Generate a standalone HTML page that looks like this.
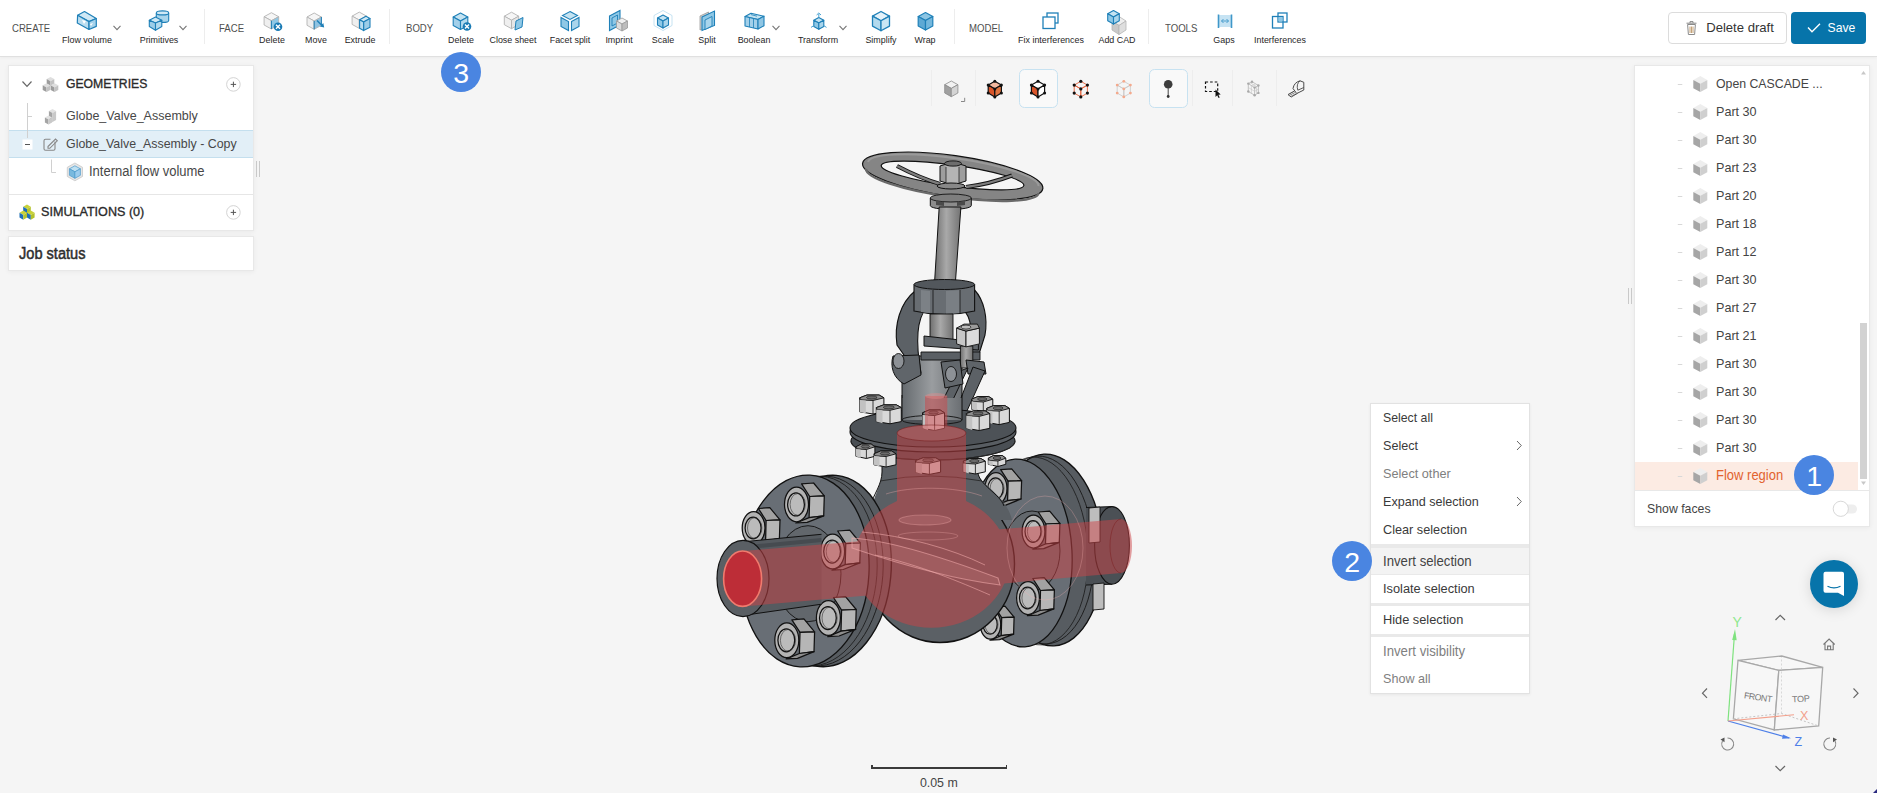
<!DOCTYPE html>
<html><head><meta charset="utf-8">
<style>
*{margin:0;padding:0;box-sizing:border-box}
html,body{width:1877px;height:793px;overflow:hidden;background:#f5f5f5;font-family:"Liberation Sans",sans-serif;color:#333}
.a{position:absolute}
.t{position:absolute;line-height:1;white-space:pre}
svg{position:absolute;overflow:visible}
</style></head><body>
<svg style="left:0;top:0" width="1877" height="793"><defs><linearGradient id="stg" x1="0" x2="1" y1="0" y2="0"><stop offset="0" stop-color="#6f6f6f"/><stop offset="0.45" stop-color="#a9a9a9"/><stop offset="1" stop-color="#737373"/></linearGradient><linearGradient id="bng" x1="0" x2="1" y1="0" y2="0"><stop offset="0" stop-color="#656a6e"/><stop offset="0.5" stop-color="#9a9da0"/><stop offset="1" stop-color="#6a6e72"/></linearGradient></defs><g transform="rotate(8 952.7 176)"><path d="M861.7,176 a91,20.5 0 1 0 182,0 a91,20.5 0 1 0 -182,0 Z M880.5,175.5 a72,10.5 0 1 0 144,0 a72,10.5 0 1 0 -144,0 Z" fill="#858585" fill-rule="evenodd" stroke="#111" stroke-width="1.2"/><path d="M867,174 a86,16 0 0 1 172,0" fill="none" stroke="#9a9a9a" stroke-width="2"/><path d="M866,181 a87,16 0 0 0 174,0" fill="none" stroke="#6a6a6a" stroke-width="2.5"/></g><path d="M897,166 Q920,178 940,184" fill="none" stroke="#111" stroke-width="4.2"/><path d="M897,166 Q920,178 940,184" fill="none" stroke="#7d7d7d" stroke-width="2.4"/><path d="M1012,175.5 Q990,184 966,187" fill="none" stroke="#111" stroke-width="4.2"/><path d="M1012,175.5 Q990,184 966,187" fill="none" stroke="#7d7d7d" stroke-width="2.4"/><path d="M930.3,198 v7.5 a20.5,4 0 0 0 41,0 v-7.5" fill="#8c8c8c" stroke="#111" stroke-width="1"/><ellipse cx="950.8" cy="198" rx="20.5" ry="4" fill="#7e7e7e" stroke="#111" stroke-width="0.9" /><polygon points="936.0,201.0 944.0,202.0 944.0,206.0 936.0,205.0" fill="#4a4a4a" stroke="none" stroke-width="1" stroke-linejoin="round" /><polygon points="957.0,202.0 965.0,201.0 965.0,205.0 957.0,206.0" fill="#4a4a4a" stroke="none" stroke-width="1" stroke-linejoin="round" /><polygon points="940.0,166.0 940.0,181.0 953.0,185.0 966.0,181.0 966.0,166.0 953.0,162.0" fill="#9d9d9d" stroke="#111" stroke-width="1" stroke-linejoin="round" /><polygon points="946.0,166.0 946.0,183.0 959.0,184.0 959.0,167.0" fill="#b4b4b4" stroke="none" stroke-width="1" stroke-linejoin="round" /><path d="M946,167 V183 M959,167 V183" stroke="#111" stroke-width="0.7"/><ellipse cx="953" cy="163.5" rx="8.5" ry="2.6" fill="#6d6d6d" stroke="#111" stroke-width="0.9" /><ellipse cx="951" cy="186" rx="14" ry="3" fill="#888" stroke="#111" stroke-width="1" /><polygon points="939.2,207.0 960.9,207.0 955.2,285.0 934.4,285.0" fill="url(#stg)" stroke="#111" stroke-width="1" stroke-linejoin="round" /><polygon points="902.0,356.0 962.0,356.0 962.0,420.0 902.0,420.0" fill="url(#bng)" stroke="#111" stroke-width="1" stroke-linejoin="round" /><path d="M915,291 C900,303 894,325 897,345 L904.6,356 C905,375 912,380 921,373 C916,345 916,320 926.4,308 Z" fill="#5c6166" stroke="#111" stroke-width="1.1"/><path d="M974.6,290 C984,300 988,318 985,335 L978.4,356 C976,362 970,360 969,352 C972,335 973,318 962,308 Z" fill="#5c6166" stroke="#111" stroke-width="1.1"/><path d="M914,284.5 V311 Q944.3,318 974.6,311 V284.5" fill="#686d72" stroke="#111" stroke-width="1.1"/><ellipse cx="944.3" cy="284.5" rx="30.3" ry="5" fill="#52575c" stroke="#111" stroke-width="1" /><polygon points="921.0,290.0 930.0,291.0 930.0,313.0 921.0,312.0" fill="#7c8186" stroke="none" stroke-width="1" stroke-linejoin="round" /><polygon points="946.0,291.0 960.0,290.0 960.0,313.0 946.0,314.0" fill="#7a7f84" stroke="none" stroke-width="1" stroke-linejoin="round" /><path d="M933,290 V314 M960,290 V313" stroke="#111" stroke-width="0.8"/><polygon points="927.3,314.7 957.6,314.7 957.6,330.0 927.3,330.0" fill="#f3f3f3" stroke="none" stroke-width="1" stroke-linejoin="round" /><polygon points="930.0,314.0 953.0,314.0 953.0,341.0 930.0,341.0" fill="url(#stg)" stroke="#111" stroke-width="0.9" stroke-linejoin="round" /><polygon points="924.0,336.0 978.4,342.0 978.4,350.0 924.0,346.0" fill="#63686d" stroke="#111" stroke-width="1" stroke-linejoin="round" /><polygon points="921.0,352.0 980.0,352.0 980.0,360.0 921.0,360.0" fill="#5a5f64" stroke="#111" stroke-width="0.9" stroke-linejoin="round" /><polygon points="960.4,346.0 972.8,346.0 972.8,368.0 960.4,368.0" fill="url(#stg)" stroke="#111" stroke-width="0.9" stroke-linejoin="round" /><polygon points="956.6,328.1 966.0,331.1 966.0,346.9 956.6,343.9" fill="#c7c7c7" stroke="#111" stroke-width="0.9" stroke-linejoin="round" /><polygon points="966.0,331.1 979.4,328.1 979.4,343.9 966.0,346.9" fill="#dcdcdc" stroke="#111" stroke-width="0.9" stroke-linejoin="round" /><polygon points="956.6,328.1 964.0,324.1 977.4,324.1 979.4,328.1 966.0,331.1" fill="#9c9c9c" stroke="#111" stroke-width="0.9" stroke-linejoin="round" /><ellipse cx="966" cy="327.1" rx="4.994" ry="2" fill="#bdbdbd" stroke="#111" stroke-width="0.7" /><path d="M893,356 C890,366 893,378 904,384 L921,375 L919,355 Z" fill="#60656a" stroke="#111" stroke-width="1"/><ellipse cx="898.5" cy="361" rx="5.5" ry="7.5" fill="#8d9196" stroke="#111" stroke-width="0.9" /><polygon points="966.0,360.0 984.0,362.0 986.0,374.0 968.0,374.0" fill="#5f6469" stroke="#111" stroke-width="1" stroke-linejoin="round" /><polygon points="957.0,372.0 968.0,368.0 948.0,410.0 939.0,408.0" fill="#5c6166" stroke="#111" stroke-width="1" stroke-linejoin="round" /><polygon points="973.0,367.0 985.0,371.0 966.0,413.0 956.0,411.0" fill="#5c6166" stroke="#111" stroke-width="1" stroke-linejoin="round" /><polygon points="941.0,362.0 960.0,360.0 963.0,384.0 945.0,388.0" fill="#62676c" stroke="#111" stroke-width="1" stroke-linejoin="round" /><ellipse cx="951" cy="374" rx="5.5" ry="7.5" fill="#8d9196" stroke="#111" stroke-width="0.9" /><ellipse cx="1049" cy="550" rx="54" ry="96" fill="#575c61" stroke="#111" stroke-width="1.4" transform="rotate(-3 1049 550)" /><ellipse cx="1042" cy="550" rx="52" ry="94" fill="none" stroke="#1a1a1a" stroke-width="0.9" transform="rotate(-3 1042 550)" /><ellipse cx="1037" cy="551" rx="51" ry="94" fill="none" stroke="#1a1a1a" stroke-width="0.8" transform="rotate(-3 1037 551)" /><ellipse cx="1020" cy="553" rx="52" ry="94" fill="#686e75" stroke="#111" stroke-width="1.3" transform="rotate(-3 1020 553)" /><ellipse cx="1032" cy="551" rx="28" ry="40" fill="#63686d" stroke="#111" stroke-width="0.9" /><polygon points="1086.0,507.5 1112.0,506.6 1112.0,584.2 1086.0,585.0" fill="#4a4f54" stroke="none" stroke-width="1" stroke-linejoin="round" /><path d="M1086,507.5 L1112,506.6 M1086,585 L1112,584.2" stroke="#111" stroke-width="1"/><ellipse cx="1112" cy="545.4" rx="17.4" ry="38.8" fill="#4b5055" stroke="#111" stroke-width="1.1" /><polygon points="1093.0,584.0 1104.0,583.0 1104.0,609.0 1093.0,610.0" fill="#bdbdbd" stroke="#111" stroke-width="0.9" stroke-linejoin="round" /><polygon points="1089.0,508.0 1100.0,507.0 1100.0,542.0 1089.0,543.0" fill="#bdbdbd" stroke="#111" stroke-width="0.9" stroke-linejoin="round" /><polygon points="1000.7,469.6 1011.7,468.8 1021.6,480.7 1008.1,481.2" fill="#a2a2a2" stroke="#111" stroke-width="1.25" stroke-linejoin="round" /><polygon points="1008.1,481.2 1021.6,480.7 1021.0,499.0 1007.6,500.6" fill="#b6b6b6" stroke="#111" stroke-width="1.25" stroke-linejoin="round" /><polygon points="1007.6,500.6 1021.0,499.0 1005.8,505.1 995.4,505.6" fill="#8e8e8e" stroke="#111" stroke-width="1.25" stroke-linejoin="round" /><ellipse cx="996" cy="488.5" rx="11.0" ry="16.0" fill="#b3b3b3" stroke="#111" stroke-width="1.25" /><ellipse cx="995.5" cy="488.5" rx="7.7" ry="10.6" fill="#bbbbbb" stroke="#111" stroke-width="1.25" /><ellipse cx="997.1" cy="488.5" rx="7.0" ry="9.9" fill="none" stroke="#333" stroke-width="0.6" /><polygon points="1038.3,512.0 1049.7,511.2 1059.9,523.4 1046.0,524.0" fill="#a2a2a2" stroke="#111" stroke-width="1.25" stroke-linejoin="round" /><polygon points="1046.0,524.0 1059.9,523.4 1059.3,542.3 1045.5,544.0" fill="#b6b6b6" stroke="#111" stroke-width="1.25" stroke-linejoin="round" /><polygon points="1045.5,544.0 1059.3,542.3 1043.7,548.6 1032.9,549.2" fill="#8e8e8e" stroke="#111" stroke-width="1.25" stroke-linejoin="round" /><ellipse cx="1033.5" cy="531.5" rx="11.4" ry="16.5" fill="#b3b3b3" stroke="#111" stroke-width="1.25" /><ellipse cx="1033.0" cy="531.5" rx="8.0" ry="10.9" fill="#bbbbbb" stroke="#111" stroke-width="1.25" /><ellipse cx="1034.6" cy="531.5" rx="7.2" ry="10.3" fill="none" stroke="#333" stroke-width="0.6" /><polygon points="1032.8,578.5 1044.2,577.7 1054.4,589.9 1040.5,590.5" fill="#a2a2a2" stroke="#111" stroke-width="1.25" stroke-linejoin="round" /><polygon points="1040.5,590.5 1054.4,589.9 1053.8,608.8 1040.0,610.5" fill="#b6b6b6" stroke="#111" stroke-width="1.25" stroke-linejoin="round" /><polygon points="1040.0,610.5 1053.8,608.8 1038.2,615.1 1027.4,615.7" fill="#8e8e8e" stroke="#111" stroke-width="1.25" stroke-linejoin="round" /><ellipse cx="1028" cy="598" rx="11.4" ry="16.5" fill="#b3b3b3" stroke="#111" stroke-width="1.25" /><ellipse cx="1027.5" cy="598" rx="8.0" ry="10.9" fill="#bbbbbb" stroke="#111" stroke-width="1.25" /><ellipse cx="1029.1" cy="598" rx="7.2" ry="10.3" fill="none" stroke="#333" stroke-width="0.6" /><polygon points="994.8,607.0 1005.0,606.2 1014.1,617.2 1001.7,617.7" fill="#a2a2a2" stroke="#111" stroke-width="1.25" stroke-linejoin="round" /><polygon points="1001.7,617.7 1014.1,617.2 1013.6,634.1 1001.2,635.6" fill="#b6b6b6" stroke="#111" stroke-width="1.25" stroke-linejoin="round" /><polygon points="1001.2,635.6 1013.6,634.1 999.6,639.7 990.0,640.2" fill="#8e8e8e" stroke="#111" stroke-width="1.25" stroke-linejoin="round" /><ellipse cx="990.5" cy="624.4" rx="10.2" ry="14.8" fill="#b3b3b3" stroke="#111" stroke-width="1.25" /><ellipse cx="990.1" cy="624.4" rx="7.1" ry="9.8" fill="#bbbbbb" stroke="#111" stroke-width="1.25" /><ellipse cx="991.5" cy="624.4" rx="6.5" ry="9.2" fill="none" stroke="#333" stroke-width="0.6" /><ellipse cx="940" cy="564" rx="74.5" ry="78.5" fill="#5b6065" stroke="#111" stroke-width="1.4" /><path d="M882,450 V472 C882,484 874,494 868,520 L1012,520 C1006,494 978,484 978,472 V450 Z" fill="#5a5f64" stroke="none"/><path d="M882,450 V472 C882,484 874,494 870,506 M978,450 V472 C978,484 1000,494 1004,506" fill="none" stroke="#111" stroke-width="1"/><path d="M880,481 Q930,471 982,481" fill="none" stroke="#222" stroke-width="0.8"/><ellipse cx="933" cy="441" rx="82" ry="19" fill="#4a4f54" stroke="#111" stroke-width="1.1" /><path d="M851,441 a82,19 0 0 0 164,0" fill="none" stroke="#2a2a2a" stroke-width="0.8"/><ellipse cx="933" cy="432" rx="83" ry="20" fill="#585d62" stroke="#111" stroke-width="1.1" /><ellipse cx="933" cy="428" rx="83" ry="19" fill="#4d5257" stroke="#111" stroke-width="1.1" /><polygon points="855.9,446.8 861.6,444.0 871.1,444.0 874.9,446.8 874.9,456.3 866.4,458.5 855.9,456.3" fill="#d9d9d9" stroke="#111" stroke-width="1" stroke-linejoin="round" /><polygon points="855.9,446.8 861.6,444.0 871.1,444.0 874.9,446.8 866.4,449.5 856.9,448.9" fill="#8e8e8e" stroke="#111" stroke-width="0.9" stroke-linejoin="round" /><polygon points="855.9,448.9 860.6,449.5 860.6,458.0 855.9,456.3" fill="#c2c2c2" stroke="none" stroke-width="1" stroke-linejoin="round" /><path d="M866.4,449.5 V458.5" stroke="#111" stroke-width="0.8"/><ellipse cx="865.4" cy="446.5" rx="4.2" ry="1.6" fill="#6a6a6a" stroke="#111" stroke-width="0.6" /><polygon points="874.0,453.8 880.6,451.0 891.6,451.0 896.0,453.8 896.0,464.8 886.1,467.0 874.0,464.8" fill="#d9d9d9" stroke="#111" stroke-width="1" stroke-linejoin="round" /><polygon points="874.0,453.8 880.6,451.0 891.6,451.0 896.0,453.8 886.1,456.5 875.1,455.9" fill="#8e8e8e" stroke="#111" stroke-width="0.9" stroke-linejoin="round" /><polygon points="874.0,455.9 879.5,456.5 879.5,466.5 874.0,464.8" fill="#c2c2c2" stroke="none" stroke-width="1" stroke-linejoin="round" /><path d="M886.1,456.5 V467.0" stroke="#111" stroke-width="0.8"/><ellipse cx="885.0" cy="453.5" rx="4.8" ry="1.6" fill="#6a6a6a" stroke="#111" stroke-width="0.6" /><polygon points="963.3,461.2 969.9,458.5 980.9,458.5 985.3,461.2 985.3,471.8 975.4,474.0 963.3,471.8" fill="#d9d9d9" stroke="#111" stroke-width="1" stroke-linejoin="round" /><polygon points="963.3,461.2 969.9,458.5 980.9,458.5 985.3,461.2 975.4,464.0 964.4,463.4" fill="#8e8e8e" stroke="#111" stroke-width="0.9" stroke-linejoin="round" /><polygon points="963.3,463.4 968.8,464.0 968.8,473.5 963.3,471.8" fill="#c2c2c2" stroke="none" stroke-width="1" stroke-linejoin="round" /><path d="M975.4,464.0 V474.0" stroke="#111" stroke-width="0.8"/><ellipse cx="974.3" cy="461.0" rx="4.8" ry="1.6" fill="#6a6a6a" stroke="#111" stroke-width="0.6" /><polygon points="988.3,458.2 993.5,455.5 1002.3,455.5 1005.8,458.2 1005.8,464.3 997.9,466.5 988.3,464.3" fill="#d9d9d9" stroke="#111" stroke-width="1" stroke-linejoin="round" /><polygon points="988.3,458.2 993.5,455.5 1002.3,455.5 1005.8,458.2 997.9,461.0 989.2,460.4" fill="#8e8e8e" stroke="#111" stroke-width="0.9" stroke-linejoin="round" /><polygon points="988.3,460.4 992.7,461.0 992.7,466.0 988.3,464.3" fill="#c2c2c2" stroke="none" stroke-width="1" stroke-linejoin="round" /><path d="M997.9,461.0 V466.5" stroke="#111" stroke-width="0.8"/><ellipse cx="997.0" cy="458.0" rx="3.9" ry="1.6" fill="#6a6a6a" stroke="#111" stroke-width="0.6" /><polygon points="915.6,460.6 923.1,457.8 935.6,457.8 940.6,460.6 940.6,472.2 929.4,474.4 915.6,472.2" fill="#d9d9d9" stroke="#111" stroke-width="1" stroke-linejoin="round" /><polygon points="915.6,460.6 923.1,457.8 935.6,457.8 940.6,460.6 929.4,463.3 916.9,462.8" fill="#8e8e8e" stroke="#111" stroke-width="0.9" stroke-linejoin="round" /><polygon points="915.6,462.8 921.9,463.3 921.9,473.9 915.6,472.2" fill="#c2c2c2" stroke="none" stroke-width="1" stroke-linejoin="round" /><path d="M929.4,463.3 V474.4" stroke="#111" stroke-width="0.8"/><ellipse cx="928.1" cy="460.3" rx="5.5" ry="1.6" fill="#6a6a6a" stroke="#111" stroke-width="0.6" /><polygon points="902.0,398.0 962.0,398.0 962.0,420.0 902.0,420.0" fill="url(#bng)" stroke="none" stroke-width="1" stroke-linejoin="round" /><path d="M902,395 V420 M962,395 V420" stroke="#111" stroke-width="1"/><ellipse cx="932" cy="420" rx="30" ry="4.5" fill="none" stroke="#111" stroke-width="0.9" /><polygon points="859.7,397.8 867.0,395.0 879.1,395.0 883.9,397.8 883.9,411.8 873.0,414.0 859.7,411.8" fill="#d9d9d9" stroke="#111" stroke-width="1" stroke-linejoin="round" /><polygon points="859.7,397.8 867.0,395.0 879.1,395.0 883.9,397.8 873.0,400.5 860.9,399.9" fill="#8e8e8e" stroke="#111" stroke-width="0.9" stroke-linejoin="round" /><polygon points="859.7,399.9 865.8,400.5 865.8,413.5 859.7,411.8" fill="#c2c2c2" stroke="none" stroke-width="1" stroke-linejoin="round" /><path d="M873.0,400.5 V414.0" stroke="#111" stroke-width="0.8"/><ellipse cx="871.8" cy="397.5" rx="5.3" ry="1.6" fill="#6a6a6a" stroke="#111" stroke-width="0.6" /><polygon points="971.6,399.2 978.0,396.5 988.6,396.5 992.8,399.2 992.8,409.3 983.3,411.5 971.6,409.3" fill="#d9d9d9" stroke="#111" stroke-width="1" stroke-linejoin="round" /><polygon points="971.6,399.2 978.0,396.5 988.6,396.5 992.8,399.2 983.3,402.0 972.7,401.4" fill="#8e8e8e" stroke="#111" stroke-width="0.9" stroke-linejoin="round" /><polygon points="971.6,401.4 976.9,402.0 976.9,411.0 971.6,409.3" fill="#c2c2c2" stroke="none" stroke-width="1" stroke-linejoin="round" /><path d="M983.3,402.0 V411.5" stroke="#111" stroke-width="0.8"/><ellipse cx="982.2" cy="399.0" rx="4.7" ry="1.6" fill="#6a6a6a" stroke="#111" stroke-width="0.6" /><polygon points="876.3,407.6 883.8,404.8 896.3,404.8 901.3,407.6 901.3,421.6 890.0,423.8 876.3,421.6" fill="#d9d9d9" stroke="#111" stroke-width="1" stroke-linejoin="round" /><polygon points="876.3,407.6 883.8,404.8 896.3,404.8 901.3,407.6 890.0,410.3 877.5,409.8" fill="#8e8e8e" stroke="#111" stroke-width="0.9" stroke-linejoin="round" /><polygon points="876.3,409.8 882.5,410.3 882.5,423.3 876.3,421.6" fill="#c2c2c2" stroke="none" stroke-width="1" stroke-linejoin="round" /><path d="M890.0,410.3 V423.8" stroke="#111" stroke-width="0.8"/><ellipse cx="888.8" cy="407.3" rx="5.5" ry="1.6" fill="#6a6a6a" stroke="#111" stroke-width="0.6" /><polygon points="986.7,408.4 993.5,405.6 1004.9,405.6 1009.4,408.4 1009.4,422.4 999.2,424.6 986.7,422.4" fill="#d9d9d9" stroke="#111" stroke-width="1" stroke-linejoin="round" /><polygon points="986.7,408.4 993.5,405.6 1004.9,405.6 1009.4,408.4 999.2,411.1 987.8,410.6" fill="#8e8e8e" stroke="#111" stroke-width="0.9" stroke-linejoin="round" /><polygon points="986.7,410.6 992.4,411.1 992.4,424.1 986.7,422.4" fill="#c2c2c2" stroke="none" stroke-width="1" stroke-linejoin="round" /><path d="M999.2,411.1 V424.6" stroke="#111" stroke-width="0.8"/><ellipse cx="998.1" cy="408.1" rx="5.0" ry="1.6" fill="#6a6a6a" stroke="#111" stroke-width="0.6" /><polygon points="966.3,413.6 973.3,410.9 985.1,410.9 989.8,413.6 989.8,428.3 979.2,430.5 966.3,428.3" fill="#d9d9d9" stroke="#111" stroke-width="1" stroke-linejoin="round" /><polygon points="966.3,413.6 973.3,410.9 985.1,410.9 989.8,413.6 979.2,416.4 967.5,415.8" fill="#8e8e8e" stroke="#111" stroke-width="0.9" stroke-linejoin="round" /><polygon points="966.3,415.8 972.2,416.4 972.2,430.0 966.3,428.3" fill="#c2c2c2" stroke="none" stroke-width="1" stroke-linejoin="round" /><path d="M979.2,416.4 V430.5" stroke="#111" stroke-width="0.8"/><ellipse cx="978.0" cy="413.4" rx="5.2" ry="1.6" fill="#6a6a6a" stroke="#111" stroke-width="0.6" /><polygon points="922.5,412.8 929.1,410.0 940.1,410.0 944.5,412.8 944.5,428.3 934.6,430.5 922.5,428.3" fill="#d9d9d9" stroke="#111" stroke-width="1" stroke-linejoin="round" /><polygon points="922.5,412.8 929.1,410.0 940.1,410.0 944.5,412.8 934.6,415.5 923.6,414.9" fill="#8e8e8e" stroke="#111" stroke-width="0.9" stroke-linejoin="round" /><polygon points="922.5,414.9 928.0,415.5 928.0,430.0 922.5,428.3" fill="#c2c2c2" stroke="none" stroke-width="1" stroke-linejoin="round" /><path d="M934.6,415.5 V430.5" stroke="#111" stroke-width="0.8"/><ellipse cx="933.5" cy="412.5" rx="4.8" ry="1.6" fill="#6a6a6a" stroke="#111" stroke-width="0.6" /><ellipse cx="828" cy="571" rx="63" ry="96" fill="#575c61" stroke="#111" stroke-width="1.4" transform="rotate(5 828 571)" /><ellipse cx="821" cy="571" rx="62" ry="95" fill="none" stroke="#1a1a1a" stroke-width="0.9" transform="rotate(4 821 571)" /><ellipse cx="815" cy="571" rx="62" ry="95" fill="none" stroke="#1a1a1a" stroke-width="0.8" transform="rotate(4 815 571)" /><ellipse cx="805" cy="571" rx="64" ry="96" fill="#686e75" stroke="#111" stroke-width="1.3" transform="rotate(3 805 571)" /><ellipse cx="808" cy="573.7" rx="33" ry="48" fill="#62676c" stroke="#111" stroke-width="0.9" /><polygon points="801.6,483.9 813.6,483.0 824.3,495.9 809.7,496.5" fill="#a2a2a2" stroke="#111" stroke-width="1.25" stroke-linejoin="round" /><polygon points="809.7,496.5 824.3,495.9 823.7,515.8 809.1,517.6" fill="#b6b6b6" stroke="#111" stroke-width="1.25" stroke-linejoin="round" /><polygon points="809.1,517.6 823.7,515.8 807.2,522.4 795.9,523.0" fill="#8e8e8e" stroke="#111" stroke-width="1.25" stroke-linejoin="round" /><ellipse cx="796.5" cy="504.4" rx="12.0" ry="17.4" fill="#b3b3b3" stroke="#111" stroke-width="1.25" /><ellipse cx="796.0" cy="504.4" rx="8.4" ry="11.5" fill="#bbbbbb" stroke="#111" stroke-width="1.25" /><ellipse cx="797.7" cy="504.4" rx="7.6" ry="10.8" fill="none" stroke="#333" stroke-width="0.6" /><polygon points="758.4,508.5 769.8,507.7 780.0,519.9 766.1,520.5" fill="#a2a2a2" stroke="#111" stroke-width="1.25" stroke-linejoin="round" /><polygon points="766.1,520.5 780.0,519.9 779.4,538.8 765.6,540.5" fill="#b6b6b6" stroke="#111" stroke-width="1.25" stroke-linejoin="round" /><polygon points="765.6,540.5 779.4,538.8 763.8,545.1 753.0,545.7" fill="#8e8e8e" stroke="#111" stroke-width="1.25" stroke-linejoin="round" /><ellipse cx="753.6" cy="528" rx="11.4" ry="16.5" fill="#b3b3b3" stroke="#111" stroke-width="1.25" /><ellipse cx="753.1" cy="528" rx="8.0" ry="10.9" fill="#bbbbbb" stroke="#111" stroke-width="1.25" /><ellipse cx="754.7" cy="528" rx="7.2" ry="10.3" fill="none" stroke="#333" stroke-width="0.6" /><polygon points="837.7,531.0 849.7,530.1 860.4,543.0 845.8,543.6" fill="#a2a2a2" stroke="#111" stroke-width="1.25" stroke-linejoin="round" /><polygon points="845.8,543.6 860.4,543.0 859.8,562.9 845.2,564.7" fill="#b6b6b6" stroke="#111" stroke-width="1.25" stroke-linejoin="round" /><polygon points="845.2,564.7 859.8,562.9 843.3,569.5 832.0,570.1" fill="#8e8e8e" stroke="#111" stroke-width="1.25" stroke-linejoin="round" /><ellipse cx="832.6" cy="551.5" rx="12.0" ry="17.4" fill="#b3b3b3" stroke="#111" stroke-width="1.25" /><ellipse cx="832.1" cy="551.5" rx="8.4" ry="11.5" fill="#bbbbbb" stroke="#111" stroke-width="1.25" /><ellipse cx="833.8" cy="551.5" rx="7.6" ry="10.8" fill="none" stroke="#333" stroke-width="0.6" /><polygon points="833.5,597.5 845.5,596.6 856.2,609.5 841.6,610.1" fill="#a2a2a2" stroke="#111" stroke-width="1.25" stroke-linejoin="round" /><polygon points="841.6,610.1 856.2,609.5 855.6,629.4 841.0,631.2" fill="#b6b6b6" stroke="#111" stroke-width="1.25" stroke-linejoin="round" /><polygon points="841.0,631.2 855.6,629.4 839.1,636.0 827.8,636.6" fill="#8e8e8e" stroke="#111" stroke-width="1.25" stroke-linejoin="round" /><ellipse cx="828.4" cy="618" rx="12.0" ry="17.4" fill="#b3b3b3" stroke="#111" stroke-width="1.25" /><ellipse cx="827.9" cy="618" rx="8.4" ry="11.5" fill="#bbbbbb" stroke="#111" stroke-width="1.25" /><ellipse cx="829.6" cy="618" rx="7.6" ry="10.8" fill="none" stroke="#333" stroke-width="0.6" /><polygon points="791.9,619.8 803.9,618.9 814.6,631.8 800.0,632.4" fill="#a2a2a2" stroke="#111" stroke-width="1.25" stroke-linejoin="round" /><polygon points="800.0,632.4 814.6,631.8 814.0,651.7 799.4,653.5" fill="#b6b6b6" stroke="#111" stroke-width="1.25" stroke-linejoin="round" /><polygon points="799.4,653.5 814.0,651.7 797.5,658.3 786.2,658.9" fill="#8e8e8e" stroke="#111" stroke-width="1.25" stroke-linejoin="round" /><ellipse cx="786.8" cy="640.3" rx="12.0" ry="17.4" fill="#b3b3b3" stroke="#111" stroke-width="1.25" /><ellipse cx="786.3" cy="640.3" rx="8.4" ry="11.5" fill="#bbbbbb" stroke="#111" stroke-width="1.25" /><ellipse cx="788.0" cy="640.3" rx="7.6" ry="10.8" fill="none" stroke="#333" stroke-width="0.6" /><polygon points="743.0,541.8 821.5,534.3 821.5,604.2 744.0,615.3" fill="#565b60" stroke="none" stroke-width="1" stroke-linejoin="round" /><path d="M743,541.8 L821.5,534.3 M744,615.3 L821.5,604.2" stroke="#111" stroke-width="1"/><path d="M748,547 L821.5,540" stroke="#464b50" stroke-width="4"/><ellipse cx="743" cy="578.5" rx="26" ry="38.2" fill="#5a5f64" stroke="#111" stroke-width="1.2" /><g opacity="0.5"><path d="M852.7,563 A79,71.5 0 0 0 1010,563 A79,71.5 0 0 0 966,501 V433 A34.5,8 0 0 0 897,433 V501 A79,71.5 0 0 0 852.7,563" fill="rgb(205,68,71)"/><path d="M743,551 L1121,519 A11,27 0 0 1 1121,573 L743,606.5" fill="rgb(205,68,71)"/><path d="M925,396 H947.3 V426 H925" fill="rgb(205,68,71)"/></g><ellipse cx="931.5" cy="433" rx="34.5" ry="8" fill="rgba(235,150,150,0.2)" stroke="rgba(110,20,20,0.6)" stroke-width="0.8" /><path d="M1121,519 A11,27 0 0 0 1121,573" fill="none" stroke="rgba(120,20,20,0.5)" stroke-width="0.8"/><ellipse cx="936" cy="396" rx="11" ry="3" fill="rgba(235,140,140,0.4)" stroke="none" stroke-width="1" /><path d="M852,538 C890,540 950,560 998,578 L1000,585 C960,580 905,566 852,548 Z" fill="rgba(245,175,175,0.12)" stroke="rgba(245,175,175,0.55)" stroke-width="1.1"/><path d="M862,532 C905,536 950,548 985,565 M875,555 C920,565 960,582 990,595" fill="none" stroke="rgba(245,175,175,0.55)" stroke-width="1"/><ellipse cx="925" cy="520" rx="26" ry="5" fill="rgba(245,175,175,0.15)" stroke="rgba(245,175,175,0.35)" stroke-width="1.2" /><ellipse cx="928" cy="536" rx="30" ry="4" fill="none" stroke="rgba(245,175,175,0.3)" stroke-width="1" /><path d="M886,494 C910,486 955,486 982,496" fill="none" stroke="rgba(245,175,175,0.35)" stroke-width="1"/><ellipse cx="1045" cy="548" rx="38" ry="52" fill="none" stroke="rgba(245,175,175,0.3)" stroke-width="1" /><ellipse cx="742.6" cy="578.7" rx="19" ry="27.7" fill="#bd2d37" stroke="#f07b6e" stroke-width="1.6" /></svg>
<div class="a" style="left:0;top:0;width:1877px;height:57px;background:#fff;border-bottom:1px solid #e0e0e0;box-shadow:0 1px 3px rgba(0,0,0,0.04)"></div>
<div class="t" style="left:11.90px;top:24.00px;font-size:10.37px;color:#505050;transform:scaleX(0.9259);transform-origin:0 0;">CREATE</div>
<div class="t" style="left:219.40px;top:24.00px;font-size:10.37px;color:#505050;transform:scaleX(0.9259);transform-origin:0 0;">FACE</div>
<div class="t" style="left:405.60px;top:24.00px;font-size:10.37px;color:#505050;transform:scaleX(0.9259);transform-origin:0 0;">BODY</div>
<div class="t" style="left:969.40px;top:24.00px;font-size:10.37px;color:#505050;transform:scaleX(0.9259);transform-origin:0 0;">MODEL</div>
<div class="t" style="left:1165.00px;top:24.00px;font-size:10.37px;color:#505050;transform:scaleX(0.9259);transform-origin:0 0;">TOOLS</div>
<div class="a" style="left:204px;top:9px;width:1px;height:35px;background:#ededed"></div>
<div class="a" style="left:389px;top:9px;width:1px;height:35px;background:#ededed"></div>
<div class="a" style="left:954px;top:9px;width:1px;height:35px;background:#ededed"></div>
<div class="a" style="left:1148px;top:9px;width:1px;height:35px;background:#ededed"></div>
<div class="t" style="left:37.20px;top:35.00px;width:100px;text-align:center;font-size:9.97px;color:#262626;transform:scaleX(0.8929);transform-origin:50% 0;">Flow volume</div>
<div class="t" style="left:108.50px;top:35.00px;width:100px;text-align:center;font-size:9.97px;color:#262626;transform:scaleX(0.8929);transform-origin:50% 0;">Primitives</div>
<div class="t" style="left:221.90px;top:35.00px;width:100px;text-align:center;font-size:9.97px;color:#262626;transform:scaleX(0.8929);transform-origin:50% 0;">Delete</div>
<div class="t" style="left:266.00px;top:35.00px;width:100px;text-align:center;font-size:9.97px;color:#262626;transform:scaleX(0.8929);transform-origin:50% 0;">Move</div>
<div class="t" style="left:310.30px;top:35.00px;width:100px;text-align:center;font-size:9.97px;color:#262626;transform:scaleX(0.8929);transform-origin:50% 0;">Extrude</div>
<div class="t" style="left:411.20px;top:35.00px;width:100px;text-align:center;font-size:9.97px;color:#262626;transform:scaleX(0.8929);transform-origin:50% 0;">Delete</div>
<div class="t" style="left:463.10px;top:35.00px;width:100px;text-align:center;font-size:9.97px;color:#262626;transform:scaleX(0.8929);transform-origin:50% 0;">Close sheet</div>
<div class="t" style="left:520.00px;top:35.00px;width:100px;text-align:center;font-size:9.97px;color:#262626;transform:scaleX(0.8929);transform-origin:50% 0;">Facet split</div>
<div class="t" style="left:568.70px;top:35.00px;width:100px;text-align:center;font-size:9.97px;color:#262626;transform:scaleX(0.8929);transform-origin:50% 0;">Imprint</div>
<div class="t" style="left:612.70px;top:35.00px;width:100px;text-align:center;font-size:9.97px;color:#262626;transform:scaleX(0.8929);transform-origin:50% 0;">Scale</div>
<div class="t" style="left:657.00px;top:35.00px;width:100px;text-align:center;font-size:9.97px;color:#262626;transform:scaleX(0.8929);transform-origin:50% 0;">Split</div>
<div class="t" style="left:704.00px;top:35.00px;width:100px;text-align:center;font-size:9.97px;color:#262626;transform:scaleX(0.8929);transform-origin:50% 0;">Boolean</div>
<div class="t" style="left:768.00px;top:35.00px;width:100px;text-align:center;font-size:9.97px;color:#262626;transform:scaleX(0.8929);transform-origin:50% 0;">Transform</div>
<div class="t" style="left:830.60px;top:35.00px;width:100px;text-align:center;font-size:9.97px;color:#262626;transform:scaleX(0.8929);transform-origin:50% 0;">Simplify</div>
<div class="t" style="left:875.00px;top:35.00px;width:100px;text-align:center;font-size:9.97px;color:#262626;transform:scaleX(0.8929);transform-origin:50% 0;">Wrap</div>
<div class="t" style="left:1000.90px;top:35.00px;width:100px;text-align:center;font-size:9.97px;color:#262626;transform:scaleX(0.8929);transform-origin:50% 0;">Fix interferences</div>
<div class="t" style="left:1066.90px;top:35.00px;width:100px;text-align:center;font-size:9.97px;color:#262626;transform:scaleX(0.8929);transform-origin:50% 0;">Add CAD</div>
<div class="t" style="left:1174.00px;top:35.00px;width:100px;text-align:center;font-size:9.97px;color:#262626;transform:scaleX(0.8929);transform-origin:50% 0;">Gaps</div>
<div class="t" style="left:1229.50px;top:35.00px;width:100px;text-align:center;font-size:9.97px;color:#262626;transform:scaleX(0.8929);transform-origin:50% 0;">Interferences</div>
<svg style="left:113px;top:25px" width="8" height="6"><polyline points="0.5,0.8 4,4.6 7.5,0.8" fill="none" stroke="#777" stroke-width="1.1"/></svg>
<svg style="left:179px;top:25px" width="8" height="6"><polyline points="0.5,0.8 4,4.6 7.5,0.8" fill="none" stroke="#777" stroke-width="1.1"/></svg>
<svg style="left:772px;top:25px" width="8" height="6"><polyline points="0.5,0.8 4,4.6 7.5,0.8" fill="none" stroke="#777" stroke-width="1.1"/></svg>
<svg style="left:839px;top:25px" width="8" height="6"><polyline points="0.5,0.8 4,4.6 7.5,0.8" fill="none" stroke="#777" stroke-width="1.1"/></svg>
<svg style="left:0;top:0" width="1877" height="56"><polygon points="77.6,15.3 84.5,11.5 96.3,18.5 89,21.6" fill="#cfe8f5" stroke="#1f80b8" stroke-width="1.2" stroke-linejoin="round"/><polygon points="77.6,15.3 89,21.6 89,29.5 77.3,23" fill="#b9ddf0" stroke="#1f80b8" stroke-width="1.2" stroke-linejoin="round"/><polygon points="89,21.6 96.3,18.5 96.3,26.4 89,29.5" fill="#a6d3eb" stroke="#1f80b8" stroke-width="1.2" stroke-linejoin="round"/><polygon points="82,20 86,21 84,24" fill="#fff"/><polygon points="90,24 93,23 91,26" fill="#fff"/><path d="M156.3,12.9 v7.5 a6.2,2 0 0 0 12.4,0 v-7.5" fill="#a9d5ec" stroke="#1f80b8" stroke-width="1.1"/><ellipse cx="162.5" cy="12.9" rx="6.2" ry="2" fill="#cfe8f5" stroke="#1f80b8" stroke-width="1.1"/><polygon points="155.5,17.1 161.8,20.2 155.5,22.9 149.3,20.2" fill="#cfe8f5" stroke="#1f80b8" stroke-width="1.1" stroke-linejoin="round"/><polygon points="149.3,20.2 155.5,22.9 155.5,30.2 149.3,26.6" fill="#9ccde8" stroke="#1f80b8" stroke-width="1.1" stroke-linejoin="round"/><polygon points="155.5,22.9 161.8,20.2 161.8,26.6 155.5,30.2" fill="#b3daee" stroke="#1f80b8" stroke-width="1.1" stroke-linejoin="round"/><polygon points="271.40,12.70 278.70,16.70 271.40,20.70 264.10,16.70" fill="#f6f6f6" stroke="#b3b3b3" stroke-width="0.9" stroke-linejoin="round"/><polygon points="264.10,16.70 271.40,20.70 271.40,29.00 264.10,25.00" fill="#efefef" stroke="#b3b3b3" stroke-width="0.9" stroke-linejoin="round"/><polygon points="271.40,20.70 278.70,16.70 278.70,25.00 271.40,29.00" fill="#8fc8e6" stroke="#b3b3b3" stroke-width="0.9" stroke-linejoin="round"/><path d="M271.4,20.7 v8.3" stroke="#1f80b8" stroke-width="1"/><circle cx="278" cy="26.7" r="4.3" fill="#1a7bb5"/><path d="M276,24.7 l4,4 M280,24.7 l-4,4" stroke="#fff" stroke-width="1.4"/><polygon points="314.20,13.00 321.40,17.00 314.20,21.00 307.00,17.00" fill="#f6f6f6" stroke="#b3b3b3" stroke-width="0.9" stroke-linejoin="round"/><polygon points="307.00,17.00 314.20,21.00 314.20,29.30 307.00,25.30" fill="#efefef" stroke="#b3b3b3" stroke-width="0.9" stroke-linejoin="round"/><polygon points="314.20,21.00 321.40,17.00 321.40,25.30 314.20,29.30" fill="#8fc3e2" stroke="#b3b3b3" stroke-width="0.9" stroke-linejoin="round"/><path d="M314.2,21 v8.3 M321.4,17 v8.3" stroke="#1f80b8" stroke-width="1"/><path d="M317,20.5 l5.5,5.5" stroke="#1f80b8" stroke-width="1.5"/><polygon points="324.2,27.5 319.8,26.6 323.3,23.1" fill="#1f80b8"/><polygon points="359.30,12.10 366.50,16.10 359.30,20.10 352.10,16.10" fill="#f6f6f6" stroke="#b3b3b3" stroke-width="0.9" stroke-linejoin="round"/><polygon points="352.10,16.10 359.30,20.10 359.30,28.40 352.10,24.40" fill="#efefef" stroke="#b3b3b3" stroke-width="0.9" stroke-linejoin="round"/><polygon points="359.30,20.10 366.50,16.10 366.50,24.40 359.30,28.40" fill="#efefef" stroke="#b3b3b3" stroke-width="0.9" stroke-linejoin="round"/><polygon points="359.6,19.8 366,16.3 370,18.6 363.6,22.1" fill="#cfe8f5" stroke="#1f80b8" stroke-width="1.1" stroke-linejoin="round"/><polygon points="363.6,22.1 370,18.6 370,27.2 363.6,30.6" fill="#9ccde8" stroke="#1f80b8" stroke-width="1.1" stroke-linejoin="round"/><polygon points="359.6,19.8 363.6,22.1 363.6,30.6 359.6,28.3" fill="#b9ddf0" stroke="#1f80b8" stroke-width="1.1" stroke-linejoin="round"/><polygon points="460.50,13.00 467.80,17.00 460.50,21.00 453.20,17.00" fill="#c4e3f2" stroke="#1f80b8" stroke-width="1.1" stroke-linejoin="round"/><polygon points="453.20,17.00 460.50,21.00 460.50,29.50 453.20,25.50" fill="#a3d0ea" stroke="#1f80b8" stroke-width="1.1" stroke-linejoin="round"/><polygon points="460.50,21.00 467.80,17.00 467.80,25.50 460.50,29.50" fill="#b3daee" stroke="#1f80b8" stroke-width="1.1" stroke-linejoin="round"/><circle cx="467" cy="26.5" r="4.3" fill="#1a7bb5"/><path d="M465,24.5 l4,4 M469,24.5 l-4,4" stroke="#fff" stroke-width="1.4"/><polygon points="511.50,12.20 518.70,16.20 511.50,20.20 504.30,16.20" fill="#f6f6f6" stroke="#b3b3b3" stroke-width="0.9" stroke-linejoin="round"/><polygon points="504.30,16.20 511.50,20.20 511.50,28.70 504.30,24.70" fill="#efefef" stroke="#b3b3b3" stroke-width="0.9" stroke-linejoin="round"/><polygon points="511.50,20.20 518.70,16.20 518.70,24.70 511.50,28.70" fill="#e6e6e6" stroke="#b3b3b3" stroke-width="0.9" stroke-linejoin="round"/><polygon points="516,21 523,17.5 522,27 515,30" fill="#8fc8e6" stroke="#1f80b8" stroke-width="1"/><polygon points="570,11.5 577.5,15.5 570,19.5 562.5,15.5" fill="#c4e3f2" stroke="#1f80b8" stroke-width="1.1"/><polygon points="561,17.5 568.5,21.5 568.5,30.5 561,26.5" fill="#8fc8e6" stroke="#1f80b8" stroke-width="1.1"/><polygon points="571.5,21.5 579,17.5 579,26.5 571.5,30.5" fill="#a9d5ec" stroke="#1f80b8" stroke-width="1.1"/><polygon points="609.5,16 620,10.5 620,25 609.5,30.5" fill="#8fc8e6" stroke="#1f80b8" stroke-width="1.1"/><polygon points="612,18 617.5,15 617.5,23 612,26" fill="none" stroke="#1f80b8" stroke-width="0.9"/><polygon points="622.00,18.00 627.50,21.00 622.00,24.00 616.50,21.00" fill="#f0f0f0" stroke="#9a9a9a" stroke-width="0.8" stroke-linejoin="round"/><polygon points="616.50,21.00 622.00,24.00 622.00,31.00 616.50,28.00" fill="#dcdcdc" stroke="#9a9a9a" stroke-width="0.8" stroke-linejoin="round"/><polygon points="622.00,24.00 627.50,21.00 627.50,28.00 622.00,31.00" fill="#bdbdbd" stroke="#9a9a9a" stroke-width="0.8" stroke-linejoin="round"/><polygon points="663,10.5 672,15.5 672,25.5 663,30.5 654,25.5 654,15.5" fill="none" stroke="#bfe0f0" stroke-width="0.9"/><polygon points="663.00,15.00 668.50,18.00 663.00,21.00 657.50,18.00" fill="#c4e3f2" stroke="#1f80b8" stroke-width="1.1" stroke-linejoin="round"/><polygon points="657.50,18.00 663.00,21.00 663.00,28.00 657.50,25.00" fill="#8fc8e6" stroke="#1f80b8" stroke-width="1.1" stroke-linejoin="round"/><polygon points="663.00,21.00 668.50,18.00 668.50,25.00 663.00,28.00" fill="#a9d5ec" stroke="#1f80b8" stroke-width="1.1" stroke-linejoin="round"/><polygon points="700,16 708.5,12 708.5,26 700,30" fill="#cfcfcf" stroke="#999" stroke-width="0.8"/><polygon points="702,17 714.5,11 714.5,25.5 702,30.5" fill="#8fc8e6" stroke="#1f80b8" stroke-width="1.1"/><polygon points="705,20 712,16.5 712,26 705,29.5" fill="#a9d5ec" stroke="#1f80b8" stroke-width="0.9"/><polygon points="745,16.5 751,13.2 764,16.2 758,19.5" fill="#c4e3f2" stroke="#1f80b8" stroke-width="1.1" stroke-linejoin="round"/><polygon points="745,16.5 758,19.5 758,29 745,26" fill="#a3d0ea" stroke="#1f80b8" stroke-width="1.1" stroke-linejoin="round"/><polygon points="758,19.5 764,16.2 764,25.7 758,29" fill="#8fc6e4" stroke="#1f80b8" stroke-width="1.1" stroke-linejoin="round"/><path d="M749.5,17.5 v9.5 M753.5,18.4 v9.6 M751,14.6 l6,1.6" fill="none" stroke="#1f80b8" stroke-width="0.8"/><polygon points="818.80,17.50 823.80,20.30 818.80,23.10 813.80,20.30" fill="#c4e3f2" stroke="#1f80b8" stroke-width="1.1" stroke-linejoin="round"/><polygon points="813.80,20.30 818.80,23.10 818.80,29.30 813.80,26.50" fill="#8fc8e6" stroke="#1f80b8" stroke-width="1.1" stroke-linejoin="round"/><polygon points="818.80,23.10 823.80,20.30 823.80,26.50 818.80,29.30" fill="#a9d5ec" stroke="#1f80b8" stroke-width="1.1" stroke-linejoin="round"/><path d="M818.8,17.5 v-3.5 M816.6,15 l2.2,-2 2.2,2 M813.5,25.8 l-2.5,1.6 M824,25.8 l2.5,1.6" fill="none" stroke="#4aa3d3" stroke-width="1"/><polygon points="881.00,11.50 889.50,16.10 881.00,20.70 872.50,16.10" fill="#e4f2fa" stroke="#1f80b8" stroke-width="1.3" stroke-linejoin="round"/><polygon points="872.50,16.10 881.00,20.70 881.00,30.70 872.50,26.10" fill="#b3daee" stroke="#1f80b8" stroke-width="1.3" stroke-linejoin="round"/><polygon points="881.00,20.70 889.50,16.10 889.50,26.10 881.00,30.70" fill="#c9e6f4" stroke="#1f80b8" stroke-width="1.3" stroke-linejoin="round"/><polygon points="925.50,12.50 932.80,16.50 925.50,20.50 918.20,16.50" fill="#8cc5e3" stroke="#1f80b8" stroke-width="1.2" stroke-linejoin="round"/><polygon points="918.20,16.50 925.50,20.50 925.50,30.00 918.20,26.00" fill="#5ea9d4" stroke="#1f80b8" stroke-width="1.2" stroke-linejoin="round"/><polygon points="925.50,20.50 932.80,16.50 932.80,26.00 925.50,30.00" fill="#74b7dc" stroke="#1f80b8" stroke-width="1.2" stroke-linejoin="round"/><rect x="1047" y="13" width="11" height="10" fill="#fff" stroke="#1f80b8" stroke-width="1.3"/><rect x="1043" y="17" width="12" height="11.5" fill="#fff" stroke="#1f80b8" stroke-width="1.3"/><polygon points="1119.00,16.50 1126.00,21.00 1119.00,25.50 1112.00,21.00" fill="#eeeeee" stroke="#b5b5b5" stroke-width="0.8" stroke-linejoin="round"/><polygon points="1112.00,21.00 1119.00,25.50 1119.00,34.50 1112.00,30.00" fill="#c9c9c9" stroke="#b5b5b5" stroke-width="0.8" stroke-linejoin="round"/><polygon points="1119.00,25.50 1126.00,21.00 1126.00,30.00 1119.00,34.50" fill="#dedede" stroke="#b5b5b5" stroke-width="0.8" stroke-linejoin="round"/><polygon points="1113.50,10.50 1119.30,13.80 1113.50,17.10 1107.70,13.80" fill="#c4e3f2" stroke="#1f80b8" stroke-width="1.1" stroke-linejoin="round"/><polygon points="1107.70,13.80 1113.50,17.10 1113.50,24.10 1107.70,20.80" fill="#8fc8e6" stroke="#1f80b8" stroke-width="1.1" stroke-linejoin="round"/><polygon points="1113.50,17.10 1119.30,13.80 1119.30,20.80 1113.50,24.10" fill="#a9d5ec" stroke="#1f80b8" stroke-width="1.1" stroke-linejoin="round"/><rect x="1218.5" y="15" width="13" height="12" fill="#c6e3f3"/><path d="M1218.5,14.5 v13.5 M1231.5,14.5 v13.5" stroke="#3f97c9" stroke-width="1.6"/><path d="M1221.5,21 h7 M1223.5,19 l-2,2 2,2 M1226.5,19 l2,2 -2,2" fill="none" stroke="#3f97c9" stroke-width="0.9"/><rect x="1278" y="13" width="9" height="9" fill="#fff" stroke="#1f80b8" stroke-width="1.3"/><rect x="1272.5" y="16.5" width="10.5" height="11.5" fill="none" stroke="#1f80b8" stroke-width="1.3"/><rect x="1278.6" y="17.1" width="3.8" height="4.3" fill="#8fc8e6"/></svg>
<div class="a" style="left:1668px;top:12px;width:119px;height:32px;border:1px solid #dcdcdc;border-radius:4px;background:#fff"></div>
<svg style="left:1684px;top:20px" width="16" height="16"><path d="M2.5,3.2 h10 M6,3 v-1.4 h3 v1.4" fill="none" stroke="#888" stroke-width="1"/><path d="M3.6,4.5 l0.8,10 h6.2 l0.8,-10 z" fill="none" stroke="#8a8a8a" stroke-width="1"/><path d="M6,6.5 v6.5 M7.5,6.5 v6.5 M9,6.5 v6.5" stroke="#b58a55" stroke-width="0.8"/></svg>
<div class="t" style="left:1706.20px;top:21.00px;font-size:13.1px;color:#333;">Delete draft</div>
<div class="a" style="left:1791px;top:12px;width:75px;height:32px;border-radius:4px;background:#0774aa"></div>
<svg style="left:1806px;top:22px" width="16" height="12"><polyline points="2,5.5 6,9.8 14,1.8" fill="none" stroke="#fff" stroke-width="1.4"/></svg>
<div class="t" style="left:1827.60px;top:22.00px;font-size:12.2px;color:#fff;">Save</div>
<div class="a" style="left:8px;top:65px;width:246px;height:166px;background:#fff;border:1px solid #e8e8e8;box-shadow:0 1px 5px rgba(0,0,0,0.05)"></div>
<div class="a" style="left:8px;top:236px;width:246px;height:35px;background:#fff;border:1px solid #e8e8e8;box-shadow:0 1px 5px rgba(0,0,0,0.05)"></div>
<div class="a" style="left:9px;top:130px;width:244px;height:28px;background:#e2eff7;border-top:1px solid #c4dfee;border-bottom:1px solid #c4dfee"></div>
<div class="a" style="left:9px;top:194px;width:244px;height:1px;background:#e6e6e6"></div>
<svg style="left:0;top:0" width="300" height="300"><polyline points="22.5,81.5 27,86.3 31.5,81.5" fill="none" stroke="#666" stroke-width="1.2"/><polygon points="50.50,77.00 54.30,79.10 50.50,81.20 46.70,79.10" fill="#dedede" stroke="none" stroke-width="1" stroke-linejoin="round"/><polygon points="46.70,79.10 50.50,81.20 50.50,85.80 46.70,83.70" fill="#9c9c9c" stroke="none" stroke-width="1" stroke-linejoin="round"/><polygon points="50.50,81.20 54.30,79.10 54.30,83.70 50.50,85.80" fill="#c2c2c2" stroke="none" stroke-width="1" stroke-linejoin="round"/><polygon points="46.50,83.20 50.30,85.30 46.50,87.40 42.70,85.30" fill="#dedede" stroke="none" stroke-width="1" stroke-linejoin="round"/><polygon points="42.70,85.30 46.50,87.40 46.50,92.00 42.70,89.90" fill="#9c9c9c" stroke="none" stroke-width="1" stroke-linejoin="round"/><polygon points="46.50,87.40 50.30,85.30 50.30,89.90 46.50,92.00" fill="#c2c2c2" stroke="none" stroke-width="1" stroke-linejoin="round"/><polygon points="54.50,83.20 58.30,85.30 54.50,87.40 50.70,85.30" fill="#dedede" stroke="none" stroke-width="1" stroke-linejoin="round"/><polygon points="50.70,85.30 54.50,87.40 54.50,92.00 50.70,89.90" fill="#9c9c9c" stroke="none" stroke-width="1" stroke-linejoin="round"/><polygon points="54.50,87.40 58.30,85.30 58.30,89.90 54.50,92.00" fill="#c2c2c2" stroke="none" stroke-width="1" stroke-linejoin="round"/><circle cx="233.4" cy="84.4" r="6.8" fill="#fff" stroke="#d4d4d4" stroke-width="1"/><path d="M230.7,84.4 h5.4 M233.4,81.7 v5.4" stroke="#555" stroke-width="1"/><circle cx="233.4" cy="212.4" r="6.8" fill="#fff" stroke="#d4d4d4" stroke-width="1"/><path d="M230.7,212.4 h5.4 M233.4,209.70000000000002 v5.4" stroke="#555" stroke-width="1"/><path d="M27.5,103 V138 M27.5,116.5 H32" stroke="#d0d0d0" stroke-width="1" fill="none"/><path d="M51.5,159.5 V172.5 H56" stroke="#d0d0d0" stroke-width="1" fill="none"/><polygon points="52.50,109.00 56.10,111.00 52.50,113.00 48.90,111.00" fill="#e2e2e2" stroke="none" stroke-width="1" stroke-linejoin="round"/><polygon points="48.90,111.00 52.50,113.00 52.50,122.00 48.90,120.00" fill="#a5a5a5" stroke="none" stroke-width="1" stroke-linejoin="round"/><polygon points="52.50,113.00 56.10,111.00 56.10,120.00 52.50,122.00" fill="#c9c9c9" stroke="none" stroke-width="1" stroke-linejoin="round"/><polygon points="48.50,115.50 52.10,117.50 48.50,119.50 44.90,117.50" fill="#e2e2e2" stroke="none" stroke-width="1" stroke-linejoin="round"/><polygon points="44.90,117.50 48.50,119.50 48.50,124.50 44.90,122.50" fill="#a5a5a5" stroke="none" stroke-width="1" stroke-linejoin="round"/><polygon points="48.50,119.50 52.10,117.50 52.10,122.50 48.50,124.50" fill="#c9c9c9" stroke="none" stroke-width="1" stroke-linejoin="round"/><rect x="22.5" y="139.5" width="10" height="10" fill="#fff"/><path d="M25,144.5 h5" stroke="#555" stroke-width="1"/><path d="M55,141.5 v7.2 a1.5,1.5 0 0 1 -1.5,1.5 h-8 a1.5,1.5 0 0 1 -1.5,-1.5 v-8 a1.5,1.5 0 0 1 1.5,-1.5 h5" fill="none" stroke="#888" stroke-width="1.1"/><path d="M48,146.5 l7.5,-7.5 l1.8,1.8 l-7.5,7.5 h-1.8 z" fill="none" stroke="#888" stroke-width="1.1"/><polygon points="74.9,163 82.5,167.3 82.5,176.5 74.9,180.8 67.3,176.5 67.3,167.3" fill="#e6e6e6" stroke="#c8c8c8" stroke-width="0.8"/><polygon points="74.90,165.80 80.40,168.80 74.90,171.80 69.40,168.80" fill="#bfe0f1" stroke="#4b9acb" stroke-width="0.7" stroke-linejoin="round"/><polygon points="69.40,168.80 74.90,171.80 74.90,178.30 69.40,175.30" fill="#79b9de" stroke="#4b9acb" stroke-width="0.7" stroke-linejoin="round"/><polygon points="74.90,171.80 80.40,168.80 80.40,175.30 74.90,178.30" fill="#9ccced" stroke="#4b9acb" stroke-width="0.7" stroke-linejoin="round"/><polygon points="27.00,204.50 30.80,206.70 27.00,208.90 23.20,206.70" fill="#c8d23a" stroke="none" stroke-width="1" stroke-linejoin="round"/><polygon points="23.20,206.70 27.00,208.90 27.00,213.70 23.20,211.50" fill="#1e6fb8" stroke="none" stroke-width="1" stroke-linejoin="round"/><polygon points="27.00,208.90 30.80,206.70 30.80,211.50 27.00,213.70" fill="#b4c22c" stroke="none" stroke-width="1" stroke-linejoin="round"/><polygon points="23.30,210.50 27.10,212.70 23.30,214.90 19.50,212.70" fill="#c8d23a" stroke="none" stroke-width="1" stroke-linejoin="round"/><polygon points="19.50,212.70 23.30,214.90 23.30,219.70 19.50,217.50" fill="#1e6fb8" stroke="none" stroke-width="1" stroke-linejoin="round"/><polygon points="23.30,214.90 27.10,212.70 27.10,217.50 23.30,219.70" fill="#b4c22c" stroke="none" stroke-width="1" stroke-linejoin="round"/><polygon points="30.80,210.50 34.60,212.70 30.80,214.90 27.00,212.70" fill="#c8d23a" stroke="none" stroke-width="1" stroke-linejoin="round"/><polygon points="27.00,212.70 30.80,214.90 30.80,219.70 27.00,217.50" fill="#1e6fb8" stroke="none" stroke-width="1" stroke-linejoin="round"/><polygon points="30.80,214.90 34.60,212.70 34.60,217.50 30.80,219.70" fill="#b4c22c" stroke="none" stroke-width="1" stroke-linejoin="round"/><path d="M256.5,161 v16 M259.5,161 v16" stroke="#c9c9c9" stroke-width="1"/></svg>
<div class="t" style="left:65.50px;top:77.00px;font-size:13.05px;color:#2a2a2a;transform:scaleX(0.9346);transform-origin:0 0;-webkit-text-stroke:0.35px #2a2a2a;">GEOMETRIES</div>
<div class="t" style="left:65.50px;top:109.00px;font-size:13.38px;color:#474747;transform:scaleX(0.9346);transform-origin:0 0;">Globe_Valve_Assembly</div>
<div class="t" style="left:65.50px;top:137.00px;font-size:13.27px;color:#474747;transform:scaleX(0.9346);transform-origin:0 0;">Globe_Valve_Assembly - Copy</div>
<div class="t" style="left:89.30px;top:165.00px;font-size:13.91px;color:#474747;transform:scaleX(0.9346);transform-origin:0 0;">Internal flow volume</div>
<div class="t" style="left:41.00px;top:205.00px;font-size:13.48px;color:#2a2a2a;transform:scaleX(0.9346);transform-origin:0 0;-webkit-text-stroke:0.35px #2a2a2a;">SIMULATIONS (0)</div>
<div class="t" style="left:19.30px;top:246.00px;font-size:15.62px;color:#2e2e2e;transform:scaleX(0.9346);transform-origin:0 0;-webkit-text-stroke:0.5px #2e2e2e;">Job status</div>
<div class="a" style="left:1634px;top:65px;width:236px;height:462px;background:#fff;border:1px solid #e8e8e8;box-shadow:0 1px 5px rgba(0,0,0,0.05)"></div>
<div class="a" style="left:1635px;top:462px;width:223px;height:28px;background:#fcebe3"></div>
<div class="a" style="left:1635px;top:490px;width:234px;height:1px;background:#e8e8e8"></div>
<svg style="left:0;top:0" width="1877" height="793"><path d="M1677.8,84.5 h4.5" stroke="#d8d8d8" stroke-width="1"/><polygon points="1700.30,76.00 1707.30,79.90 1700.30,83.80 1693.30,79.90" fill="#eeeeee" stroke="none" stroke-width="1" stroke-linejoin="round"/><polygon points="1693.30,79.90 1700.30,83.80 1700.30,92.10 1693.30,88.20" fill="#a6a6a6" stroke="none" stroke-width="1" stroke-linejoin="round"/><polygon points="1700.30,83.80 1707.30,79.90 1707.30,88.20 1700.30,92.10" fill="#cfcfcf" stroke="none" stroke-width="1" stroke-linejoin="round"/><path d="M1677.8,112.5 h4.5" stroke="#d8d8d8" stroke-width="1"/><polygon points="1700.30,104.00 1707.30,107.90 1700.30,111.80 1693.30,107.90" fill="#eeeeee" stroke="none" stroke-width="1" stroke-linejoin="round"/><polygon points="1693.30,107.90 1700.30,111.80 1700.30,120.10 1693.30,116.20" fill="#a6a6a6" stroke="none" stroke-width="1" stroke-linejoin="round"/><polygon points="1700.30,111.80 1707.30,107.90 1707.30,116.20 1700.30,120.10" fill="#cfcfcf" stroke="none" stroke-width="1" stroke-linejoin="round"/><path d="M1677.8,140.5 h4.5" stroke="#d8d8d8" stroke-width="1"/><polygon points="1700.30,132.00 1707.30,135.90 1700.30,139.80 1693.30,135.90" fill="#eeeeee" stroke="none" stroke-width="1" stroke-linejoin="round"/><polygon points="1693.30,135.90 1700.30,139.80 1700.30,148.10 1693.30,144.20" fill="#a6a6a6" stroke="none" stroke-width="1" stroke-linejoin="round"/><polygon points="1700.30,139.80 1707.30,135.90 1707.30,144.20 1700.30,148.10" fill="#cfcfcf" stroke="none" stroke-width="1" stroke-linejoin="round"/><path d="M1677.8,168.5 h4.5" stroke="#d8d8d8" stroke-width="1"/><polygon points="1700.30,160.00 1707.30,163.90 1700.30,167.80 1693.30,163.90" fill="#eeeeee" stroke="none" stroke-width="1" stroke-linejoin="round"/><polygon points="1693.30,163.90 1700.30,167.80 1700.30,176.10 1693.30,172.20" fill="#a6a6a6" stroke="none" stroke-width="1" stroke-linejoin="round"/><polygon points="1700.30,167.80 1707.30,163.90 1707.30,172.20 1700.30,176.10" fill="#cfcfcf" stroke="none" stroke-width="1" stroke-linejoin="round"/><path d="M1677.8,196.5 h4.5" stroke="#d8d8d8" stroke-width="1"/><polygon points="1700.30,188.00 1707.30,191.90 1700.30,195.80 1693.30,191.90" fill="#eeeeee" stroke="none" stroke-width="1" stroke-linejoin="round"/><polygon points="1693.30,191.90 1700.30,195.80 1700.30,204.10 1693.30,200.20" fill="#a6a6a6" stroke="none" stroke-width="1" stroke-linejoin="round"/><polygon points="1700.30,195.80 1707.30,191.90 1707.30,200.20 1700.30,204.10" fill="#cfcfcf" stroke="none" stroke-width="1" stroke-linejoin="round"/><path d="M1677.8,224.5 h4.5" stroke="#d8d8d8" stroke-width="1"/><polygon points="1700.30,216.00 1707.30,219.90 1700.30,223.80 1693.30,219.90" fill="#eeeeee" stroke="none" stroke-width="1" stroke-linejoin="round"/><polygon points="1693.30,219.90 1700.30,223.80 1700.30,232.10 1693.30,228.20" fill="#a6a6a6" stroke="none" stroke-width="1" stroke-linejoin="round"/><polygon points="1700.30,223.80 1707.30,219.90 1707.30,228.20 1700.30,232.10" fill="#cfcfcf" stroke="none" stroke-width="1" stroke-linejoin="round"/><path d="M1677.8,252.5 h4.5" stroke="#d8d8d8" stroke-width="1"/><polygon points="1700.30,244.00 1707.30,247.90 1700.30,251.80 1693.30,247.90" fill="#eeeeee" stroke="none" stroke-width="1" stroke-linejoin="round"/><polygon points="1693.30,247.90 1700.30,251.80 1700.30,260.10 1693.30,256.20" fill="#a6a6a6" stroke="none" stroke-width="1" stroke-linejoin="round"/><polygon points="1700.30,251.80 1707.30,247.90 1707.30,256.20 1700.30,260.10" fill="#cfcfcf" stroke="none" stroke-width="1" stroke-linejoin="round"/><path d="M1677.8,280.5 h4.5" stroke="#d8d8d8" stroke-width="1"/><polygon points="1700.30,272.00 1707.30,275.90 1700.30,279.80 1693.30,275.90" fill="#eeeeee" stroke="none" stroke-width="1" stroke-linejoin="round"/><polygon points="1693.30,275.90 1700.30,279.80 1700.30,288.10 1693.30,284.20" fill="#a6a6a6" stroke="none" stroke-width="1" stroke-linejoin="round"/><polygon points="1700.30,279.80 1707.30,275.90 1707.30,284.20 1700.30,288.10" fill="#cfcfcf" stroke="none" stroke-width="1" stroke-linejoin="round"/><path d="M1677.8,308.5 h4.5" stroke="#d8d8d8" stroke-width="1"/><polygon points="1700.30,300.00 1707.30,303.90 1700.30,307.80 1693.30,303.90" fill="#eeeeee" stroke="none" stroke-width="1" stroke-linejoin="round"/><polygon points="1693.30,303.90 1700.30,307.80 1700.30,316.10 1693.30,312.20" fill="#a6a6a6" stroke="none" stroke-width="1" stroke-linejoin="round"/><polygon points="1700.30,307.80 1707.30,303.90 1707.30,312.20 1700.30,316.10" fill="#cfcfcf" stroke="none" stroke-width="1" stroke-linejoin="round"/><path d="M1677.8,336.5 h4.5" stroke="#d8d8d8" stroke-width="1"/><polygon points="1700.30,328.00 1707.30,331.90 1700.30,335.80 1693.30,331.90" fill="#eeeeee" stroke="none" stroke-width="1" stroke-linejoin="round"/><polygon points="1693.30,331.90 1700.30,335.80 1700.30,344.10 1693.30,340.20" fill="#a6a6a6" stroke="none" stroke-width="1" stroke-linejoin="round"/><polygon points="1700.30,335.80 1707.30,331.90 1707.30,340.20 1700.30,344.10" fill="#cfcfcf" stroke="none" stroke-width="1" stroke-linejoin="round"/><path d="M1677.8,364.5 h4.5" stroke="#d8d8d8" stroke-width="1"/><polygon points="1700.30,356.00 1707.30,359.90 1700.30,363.80 1693.30,359.90" fill="#eeeeee" stroke="none" stroke-width="1" stroke-linejoin="round"/><polygon points="1693.30,359.90 1700.30,363.80 1700.30,372.10 1693.30,368.20" fill="#a6a6a6" stroke="none" stroke-width="1" stroke-linejoin="round"/><polygon points="1700.30,363.80 1707.30,359.90 1707.30,368.20 1700.30,372.10" fill="#cfcfcf" stroke="none" stroke-width="1" stroke-linejoin="round"/><path d="M1677.8,392.5 h4.5" stroke="#d8d8d8" stroke-width="1"/><polygon points="1700.30,384.00 1707.30,387.90 1700.30,391.80 1693.30,387.90" fill="#eeeeee" stroke="none" stroke-width="1" stroke-linejoin="round"/><polygon points="1693.30,387.90 1700.30,391.80 1700.30,400.10 1693.30,396.20" fill="#a6a6a6" stroke="none" stroke-width="1" stroke-linejoin="round"/><polygon points="1700.30,391.80 1707.30,387.90 1707.30,396.20 1700.30,400.10" fill="#cfcfcf" stroke="none" stroke-width="1" stroke-linejoin="round"/><path d="M1677.8,420.5 h4.5" stroke="#d8d8d8" stroke-width="1"/><polygon points="1700.30,412.00 1707.30,415.90 1700.30,419.80 1693.30,415.90" fill="#eeeeee" stroke="none" stroke-width="1" stroke-linejoin="round"/><polygon points="1693.30,415.90 1700.30,419.80 1700.30,428.10 1693.30,424.20" fill="#a6a6a6" stroke="none" stroke-width="1" stroke-linejoin="round"/><polygon points="1700.30,419.80 1707.30,415.90 1707.30,424.20 1700.30,428.10" fill="#cfcfcf" stroke="none" stroke-width="1" stroke-linejoin="round"/><path d="M1677.8,448.5 h4.5" stroke="#d8d8d8" stroke-width="1"/><polygon points="1700.30,440.00 1707.30,443.90 1700.30,447.80 1693.30,443.90" fill="#eeeeee" stroke="none" stroke-width="1" stroke-linejoin="round"/><polygon points="1693.30,443.90 1700.30,447.80 1700.30,456.10 1693.30,452.20" fill="#a6a6a6" stroke="none" stroke-width="1" stroke-linejoin="round"/><polygon points="1700.30,447.80 1707.30,443.90 1707.30,452.20 1700.30,456.10" fill="#cfcfcf" stroke="none" stroke-width="1" stroke-linejoin="round"/><path d="M1677.8,476.5 h4.5" stroke="#d8d8d8" stroke-width="1"/><polygon points="1700.30,468.00 1707.30,471.90 1700.30,475.80 1693.30,471.90" fill="#eeeeee" stroke="none" stroke-width="1" stroke-linejoin="round"/><polygon points="1693.30,471.90 1700.30,475.80 1700.30,484.10 1693.30,480.20" fill="#a6a6a6" stroke="none" stroke-width="1" stroke-linejoin="round"/><polygon points="1700.30,475.80 1707.30,471.90 1707.30,480.20 1700.30,484.10" fill="#cfcfcf" stroke="none" stroke-width="1" stroke-linejoin="round"/><polygon points="1861,74.5 1866,74.5 1863.5,71" fill="#c8c8c8"/><polygon points="1861,481.5 1866,481.5 1863.5,485" fill="#c8c8c8"/><rect x="1860" y="323" width="7" height="156" fill="#d2d2d2"/><rect x="1834" y="504.5" width="23" height="9" rx="4.5" fill="#eeeeee"/><circle cx="1840.8" cy="508.8" r="7.6" fill="#fff" stroke="#d8d8d8" stroke-width="1"/><path d="M1628.5,288 v16 M1631.5,288 v16" stroke="#c9c9c9" stroke-width="1"/></svg>
<div class="t" style="left:1715.50px;top:77.00px;font-size:13.16px;color:#444;transform:scaleX(0.9346);transform-origin:0 0;">Open CASCADE ...</div>
<div class="t" style="left:1715.50px;top:105.00px;font-size:13.48px;color:#444;transform:scaleX(0.9346);transform-origin:0 0;">Part 30</div>
<div class="t" style="left:1715.50px;top:133.00px;font-size:13.48px;color:#444;transform:scaleX(0.9346);transform-origin:0 0;">Part 30</div>
<div class="t" style="left:1715.50px;top:161.00px;font-size:13.48px;color:#444;transform:scaleX(0.9346);transform-origin:0 0;">Part 23</div>
<div class="t" style="left:1715.50px;top:189.00px;font-size:13.48px;color:#444;transform:scaleX(0.9346);transform-origin:0 0;">Part 20</div>
<div class="t" style="left:1715.50px;top:217.00px;font-size:13.48px;color:#444;transform:scaleX(0.9346);transform-origin:0 0;">Part 18</div>
<div class="t" style="left:1715.50px;top:245.00px;font-size:13.48px;color:#444;transform:scaleX(0.9346);transform-origin:0 0;">Part 12</div>
<div class="t" style="left:1715.50px;top:273.00px;font-size:13.48px;color:#444;transform:scaleX(0.9346);transform-origin:0 0;">Part 30</div>
<div class="t" style="left:1715.50px;top:301.00px;font-size:13.48px;color:#444;transform:scaleX(0.9346);transform-origin:0 0;">Part 27</div>
<div class="t" style="left:1715.50px;top:329.00px;font-size:13.48px;color:#444;transform:scaleX(0.9346);transform-origin:0 0;">Part 21</div>
<div class="t" style="left:1715.50px;top:357.00px;font-size:13.48px;color:#444;transform:scaleX(0.9346);transform-origin:0 0;">Part 30</div>
<div class="t" style="left:1715.50px;top:385.00px;font-size:13.48px;color:#444;transform:scaleX(0.9346);transform-origin:0 0;">Part 30</div>
<div class="t" style="left:1715.50px;top:413.00px;font-size:13.48px;color:#444;transform:scaleX(0.9346);transform-origin:0 0;">Part 30</div>
<div class="t" style="left:1715.50px;top:441.00px;font-size:13.48px;color:#444;transform:scaleX(0.9346);transform-origin:0 0;">Part 30</div>
<div class="t" style="left:1715.50px;top:469.00px;font-size:13.91px;color:#e2622e;transform:scaleX(0.9346);transform-origin:0 0;">Flow region</div>
<div class="t" style="left:1647.00px;top:502.00px;font-size:13.16px;color:#444;transform:scaleX(0.9346);transform-origin:0 0;">Show faces</div>
<div class="a" style="left:1370px;top:403px;width:160px;height:291px;background:#e9e9e9;border:1px solid #e2e2e2;box-shadow:0 1px 3px rgba(0,0,0,0.06)"></div>
<div class="a" style="left:1371px;top:404px;width:158px;height:140px;background:#fff"></div>
<div class="a" style="left:1371px;top:548px;width:158px;height:26px;background:#f3f3f3"></div>
<div class="a" style="left:1371px;top:575px;width:158px;height:28px;background:#fff"></div>
<div class="a" style="left:1371px;top:606px;width:158px;height:28px;background:#fff"></div>
<div class="a" style="left:1371px;top:637px;width:158px;height:56px;background:#fff"></div>
<div class="t" style="left:1383.30px;top:411.00px;font-size:13.16px;color:#3a3a3a;transform:scaleX(0.9346);transform-origin:0 0;">Select all</div>
<div class="t" style="left:1383.30px;top:439.00px;font-size:13.48px;color:#3a3a3a;transform:scaleX(0.9346);transform-origin:0 0;">Select</div>
<div class="t" style="left:1383.30px;top:467.00px;font-size:13.59px;color:#808080;transform:scaleX(0.9346);transform-origin:0 0;">Select other</div>
<div class="t" style="left:1383.30px;top:495.00px;font-size:13.48px;color:#3a3a3a;transform:scaleX(0.9346);transform-origin:0 0;">Expand selection</div>
<div class="t" style="left:1383.30px;top:523.00px;font-size:13.59px;color:#3a3a3a;transform:scaleX(0.9346);transform-origin:0 0;">Clear selection</div>
<div class="t" style="left:1383.30px;top:554.00px;font-size:14.12px;color:#444;transform:scaleX(0.9346);transform-origin:0 0;">Invert selection</div>
<div class="t" style="left:1383.30px;top:582.00px;font-size:13.7px;color:#3a3a3a;transform:scaleX(0.9346);transform-origin:0 0;">Isolate selection</div>
<div class="t" style="left:1383.30px;top:613.00px;font-size:13.7px;color:#3a3a3a;transform:scaleX(0.9346);transform-origin:0 0;">Hide selection</div>
<div class="t" style="left:1383.30px;top:644.00px;font-size:14.12px;color:#808080;transform:scaleX(0.9346);transform-origin:0 0;">Invert visibility</div>
<div class="t" style="left:1383.30px;top:672.00px;font-size:13.48px;color:#808080;transform:scaleX(0.9346);transform-origin:0 0;">Show all</div>
<svg style="left:0;top:0" width="1877" height="793"><polyline points="1517,441 1521.3,445.5 1517,450" fill="none" stroke="#666" stroke-width="1"/><polyline points="1517,497 1521.3,501.5 1517,506" fill="none" stroke="#666" stroke-width="1"/></svg>
<div class="a" style="left:1794px;top:455px;width:40px;height:40px;border-radius:50%;background:#4a85e1"></div>
<div class="t" style="left:1806.20px;top:462.00px;font-size:28.5px;color:#fff;">1</div>
<div class="a" style="left:1332px;top:541px;width:40px;height:40px;border-radius:50%;background:#4a85e1"></div>
<div class="t" style="left:1344.20px;top:548.00px;font-size:28.5px;color:#fff;">2</div>
<div class="a" style="left:441px;top:52px;width:40px;height:40px;border-radius:50%;background:#4a85e1"></div>
<div class="t" style="left:453.20px;top:59.00px;font-size:28.5px;color:#fff;">3</div>
<div class="a" style="left:1810px;top:560px;width:48px;height:48px;border-radius:50%;background:#0774aa;box-shadow:0 2px 14px rgba(0,0,0,0.13)"></div>
<svg style="left:1823px;top:571px" width="24" height="26"><path d="M2.5,0.8 h16.5 a2,2 0 0 1 2,2 v22.2 l-6,-3.3 h-12.5 a2,2 0 0 1 -2,-2 v-16.9 a2,2 0 0 1 2,-2 z" fill="#fff"/><path d="M4.5,15.2 q6.5,3.5 13,0" fill="none" stroke="#0774aa" stroke-width="1.2"/></svg>
<div class="a" style="left:871px;top:767px;width:136px;height:2px;background:#3a3a3a"></div>
<div class="a" style="left:871px;top:765px;width:1.5px;height:4px;background:#3a3a3a"></div>
<div class="a" style="left:1005.5px;top:765px;width:1.5px;height:4px;background:#3a3a3a"></div>
<div class="t" style="left:919.90px;top:777.00px;font-size:12.4px;color:#444;">0.05 m</div>
<svg style="left:1873px;top:789px" width="4" height="4"><polygon points="4,0 4,4 0,4" fill="#2a2a80"/></svg>
<svg style="left:0;top:0" width="1877" height="793"><path d="M931.5,70 V106" stroke="#ededed" stroke-width="1"/><path d="M975.5,70 V106" stroke="#ededed" stroke-width="1"/><path d="M1192.5,70 V106" stroke="#ededed" stroke-width="1"/><path d="M1232.5,70 V106" stroke="#ededed" stroke-width="1"/><path d="M1276.5,70 V106" stroke="#ededed" stroke-width="1"/><rect x="1019.5" y="69.5" width="38" height="38" rx="5" fill="#f9f9f9" stroke="#c7e2f1" stroke-width="1"/><rect x="1149.5" y="69.5" width="38" height="38" rx="5" fill="#f9f9f9" stroke="#c7e2f1" stroke-width="1"/><polygon points="951.30,81.00 957.90,84.70 951.30,88.40 944.70,84.70" fill="#f2f2f2" stroke="#8a8a8a" stroke-width="0.8" stroke-linejoin="round"/><polygon points="944.70,84.70 951.30,88.40 951.30,96.70 944.70,93.00" fill="#a0a0a0" stroke="#8a8a8a" stroke-width="0.8" stroke-linejoin="round"/><polygon points="951.30,88.40 957.90,84.70 957.90,93.00 951.30,96.70" fill="#d4d4d4" stroke="#8a8a8a" stroke-width="0.8" stroke-linejoin="round"/><path d="M961,101.5 h3.7 v-3.7" fill="none" stroke="#888" stroke-width="1"/><polygon points="994.80,81.30 1001.40,85.10 994.80,88.90 988.20,85.10" fill="#f2b9a0" stroke="#111" stroke-width="1.2" stroke-linejoin="round"/><polygon points="988.20,85.10 994.80,88.90 994.80,96.90 988.20,93.10" fill="#d9552a" stroke="#111" stroke-width="1.2" stroke-linejoin="round"/><polygon points="994.80,88.90 1001.40,85.10 1001.40,93.10 994.80,96.90" fill="#e0733f" stroke="#111" stroke-width="1.2" stroke-linejoin="round"/><circle cx="994.80" cy="81.30" r="1.5" fill="#111"/><circle cx="1001.40" cy="85.10" r="1.5" fill="#111"/><circle cx="994.80" cy="88.90" r="1.5" fill="#111"/><circle cx="988.20" cy="85.10" r="1.5" fill="#111"/><circle cx="988.20" cy="93.10" r="1.5" fill="#111"/><circle cx="994.80" cy="96.90" r="1.5" fill="#111"/><circle cx="1001.40" cy="93.10" r="1.5" fill="#111"/><polygon points="1038.00,81.30 1044.60,85.10 1038.00,88.90 1031.40,85.10" fill="#ffffff" stroke="#111" stroke-width="1.2" stroke-linejoin="round"/><polygon points="1031.40,85.10 1038.00,88.90 1038.00,96.90 1031.40,93.10" fill="#d9552a" stroke="#111" stroke-width="1.2" stroke-linejoin="round"/><polygon points="1038.00,88.90 1044.60,85.10 1044.60,93.10 1038.00,96.90" fill="#ffffff" stroke="#111" stroke-width="1.2" stroke-linejoin="round"/><circle cx="1038.00" cy="81.30" r="1.5" fill="#111"/><circle cx="1044.60" cy="85.10" r="1.5" fill="#111"/><circle cx="1038.00" cy="88.90" r="1.5" fill="#111"/><circle cx="1031.40" cy="85.10" r="1.5" fill="#111"/><circle cx="1031.40" cy="93.10" r="1.5" fill="#111"/><circle cx="1038.00" cy="96.90" r="1.5" fill="#111"/><circle cx="1044.60" cy="93.10" r="1.5" fill="#111"/><polygon points="1080.80,81.30 1087.40,85.10 1080.80,88.90 1074.20,85.10" fill="none" stroke="#e8613a" stroke-width="0.9" stroke-linejoin="round"/><polygon points="1074.20,85.10 1080.80,88.90 1080.80,96.90 1074.20,93.10" fill="none" stroke="#e8613a" stroke-width="0.9" stroke-linejoin="round"/><polygon points="1080.80,88.90 1087.40,85.10 1087.40,93.10 1080.80,96.90" fill="none" stroke="#e8613a" stroke-width="0.9" stroke-linejoin="round"/><circle cx="1080.80" cy="81.30" r="1.6" fill="#111"/><circle cx="1087.40" cy="85.10" r="1.6" fill="#111"/><circle cx="1080.80" cy="88.90" r="1.6" fill="#111"/><circle cx="1074.20" cy="85.10" r="1.6" fill="#111"/><circle cx="1074.20" cy="93.10" r="1.6" fill="#111"/><circle cx="1080.80" cy="96.90" r="1.6" fill="#111"/><circle cx="1087.40" cy="93.10" r="1.6" fill="#111"/><polygon points="1123.80,81.30 1130.40,85.10 1123.80,88.90 1117.20,85.10" fill="none" stroke="#c8c8c8" stroke-width="0.8" stroke-linejoin="round"/><polygon points="1117.20,85.10 1123.80,88.90 1123.80,96.90 1117.20,93.10" fill="none" stroke="#c8c8c8" stroke-width="0.8" stroke-linejoin="round"/><polygon points="1123.80,88.90 1130.40,85.10 1130.40,93.10 1123.80,96.90" fill="none" stroke="#c8c8c8" stroke-width="0.8" stroke-linejoin="round"/><circle cx="1123.80" cy="81.30" r="1.4" fill="#f4a98c"/><circle cx="1130.40" cy="85.10" r="1.4" fill="#f4a98c"/><circle cx="1123.80" cy="88.90" r="1.4" fill="#f4a98c"/><circle cx="1117.20" cy="85.10" r="1.4" fill="#f4a98c"/><circle cx="1117.20" cy="93.10" r="1.4" fill="#f4a98c"/><circle cx="1123.80" cy="96.90" r="1.4" fill="#f4a98c"/><circle cx="1130.40" cy="93.10" r="1.4" fill="#f4a98c"/><circle cx="1168.2" cy="84.2" r="4.3" fill="#3d3d3d"/><path d="M1168.2,88 V96" stroke="#555" stroke-width="1.1"/><circle cx="1168.2" cy="96.5" r="1.4" fill="#333"/><rect x="1205.5" y="82" width="12.2" height="9.5" fill="none" stroke="#111" stroke-width="1.2" stroke-dasharray="2.6,2"/><polygon points="1215.5,89.5 1215.5,97 1217.2,95.3 1218.6,98 1219.7,97.4 1218.4,94.8 1220.7,94.6" fill="#111"/><path d="M1252,81.7 L1258.4,85.5 L1254.6,87.6 L1248.3,83.6 Z M1248.3,83.6 V91.5 L1254.6,95.2 V87.6 M1258.4,85.5 V92.9 L1254.6,95.2" fill="none" stroke="#b4b4b4" stroke-width="0.8"/><path d="M1251.4,85.6 V93.4 M1256.5,86.5 V94 M1248.3,87.5 L1254.6,91.3 L1258.4,89.2 M1250,82.6 L1256.5,86.5 M1255.2,84.6 L1251.4,85.6" fill="none" stroke="#c4c4c4" stroke-width="0.6"/><circle cx="1252" cy="81.7" r="1.2" fill="#a8a8a8"/><circle cx="1258.4" cy="85.5" r="1.2" fill="#a8a8a8"/><circle cx="1254.6" cy="87.6" r="1.2" fill="#a8a8a8"/><circle cx="1248.3" cy="83.6" r="1.2" fill="#a8a8a8"/><circle cx="1248.3" cy="91.5" r="1.2" fill="#a8a8a8"/><circle cx="1254.6" cy="95.2" r="1.2" fill="#a8a8a8"/><circle cx="1258.4" cy="92.9" r="1.2" fill="#a8a8a8"/><path d="M1293,88.5 Q1294,82.5 1300,80.8 L1303.8,82.3 V90 L1296.8,93.5 Z" fill="#f4f4f4" stroke="#4a4a4a" stroke-width="1" stroke-linejoin="round"/><path d="M1300,80.8 Q1296,84 1297.8,90.2 L1303.8,87.5" fill="none" stroke="#4a4a4a" stroke-width="0.9"/><path d="M1294,91.2 L1288,94.6 L1291.2,97 L1297.5,93.3" fill="#dcdcdc" stroke="#4a4a4a" stroke-width="1" stroke-linejoin="round"/><path d="M1290,93.6 l2.6,2 M1292,92.6 l2.6,2 M1294,91.6 l2.4,1.9" stroke="#555" stroke-width="0.7"/></svg>
<svg style="left:0;top:0" width="1877" height="793"><polyline points="1775.5,620 1780.2,615.3 1785,620" fill="none" stroke="#666" stroke-width="1.2"/><polyline points="1775.5,766 1780.2,770.7 1785,766" fill="none" stroke="#666" stroke-width="1.2"/><polyline points="1707,688.5 1702.5,693.2 1707,697.8" fill="none" stroke="#666" stroke-width="1.2"/><polyline points="1853.5,688.5 1858,693.2 1853.5,697.8" fill="none" stroke="#666" stroke-width="1.2"/><path d="M1823.5,644.5 l5.6,-5.5 5.6,5.5 M1825,643.2 v6.5 h8.2 v-6.5 M1827.6,649.7 v-3.6 h3 v3.6" fill="none" stroke="#777" stroke-width="1.1"/><path d="M1722.5,741 a6,6 0 1 0 5,-3" fill="none" stroke="#888" stroke-width="1.1"/><polygon points="1720.5,739.5 1724.5,737.5 1724.5,742.3" fill="#555"/><path d="M1835,741 a6,6 0 1 1 -5,-3" fill="none" stroke="#888" stroke-width="1.1"/><polygon points="1837,739.5 1833,737.5 1833,742.3" fill="#555"/><polygon points="1738,660.3 1781.8,656 1822.7,667.4 1778.8,670.4" fill="#f7f7f7" stroke="#a8a8a8" stroke-width="1.3"/><polygon points="1738,660.3 1778.8,670.4 1774.3,730 1733.4,718.8" fill="#f7f7f7" stroke="#a8a8a8" stroke-width="1.3"/><polygon points="1778.8,670.4 1822.7,667.4 1818.7,726 1774.3,730" fill="#f7f7f7" stroke="#a8a8a8" stroke-width="1.3"/><path d="M1733.4,718.8 L1781.5,713.5 1818.7,726" fill="none" stroke="#c4c4c4" stroke-width="1" stroke-dasharray="2,2"/><path d="M1781.5,713.5 V657" fill="none" stroke="#cfcfcf" stroke-width="0.8" stroke-dasharray="2,2"/><path d="M1728,721 L1734.5,634" stroke="#7ee27e" stroke-width="1.2"/><polygon points="1732.2,640 1735,629 1736.7,640.3" fill="#7ee27e"/><path d="M1728,721 L1789,738" stroke="#4d7fe8" stroke-width="1.2"/><polygon points="1783,734.5 1791,738.3 1782,738.8" fill="#4d7fe8"/><path d="M1728,721 L1794,714.8" stroke="#f2a08c" stroke-width="1.1"/></svg>
<div class="t" style="left:1732.50px;top:615.00px;font-size:14px;color:#8de88d;">Y</div>
<div class="t" style="left:1794.50px;top:736.00px;font-size:12.5px;color:#4d7fe8;">Z</div>
<div class="t" style="left:1800.00px;top:710.00px;font-size:12.5px;color:#f2a08c;">X</div>
<div class="t" style="left:1744.00px;top:693.00px;font-size:8.8px;color:#777;transform:rotate(8deg);transform-origin:12px 4px;letter-spacing:-0.5px;">FRONT</div>
<div class="t" style="left:1791.50px;top:695.00px;font-size:9px;color:#777;transform:rotate(-4deg);letter-spacing:-0.3px;">TOP</div>
</body></html>
